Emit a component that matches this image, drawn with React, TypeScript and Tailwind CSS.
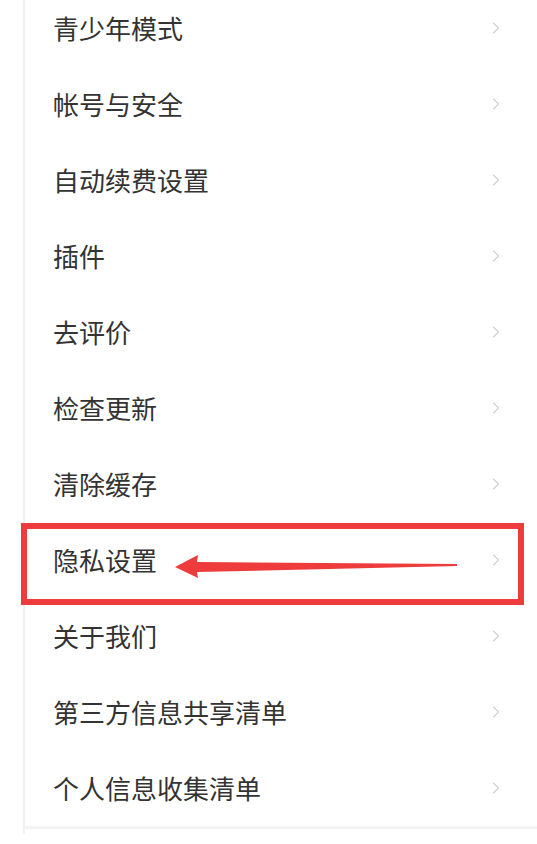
import { ChevronRight } from "lucide-react";

const items = [
  "青少年模式",
  "帐号与安全",
  "自动续费设置",
  "插件",
  "去评价",
  "检查更新",
  "清除缓存",
  "隐私设置",
  "关于我们",
  "第三方信息共享清单",
  "个人信息收集清单",
];

function SettingRow({ label }: { label: string }) {
  return (
    <div className="flex h-[76px] items-center justify-between pl-[28px] pr-[31px]">
      <span className="text-[26px] leading-none text-[#333333]">{label}</span>
      <ChevronRight className="h-[20px] w-[20px] text-[#cfcfcf]" strokeWidth={1.3} />
    </div>
  );
}

export default function App() {
  return (
    <div
      className="relative h-[844px] w-[537px] overflow-hidden bg-white"
      style={{ fontFamily: '"Noto Sans CJK SC", "Noto Sans", sans-serif' }}
    >
      <div className="ml-[23px] h-full border-l-2 border-[#f1f1f1]">
        <div className="-mt-[10px]">
          {items.map((item) => (
            <SettingRow key={item} label={item} />
          ))}
        </div>
        <div className="h-[3px] bg-[#f4f4f4]" />
      </div>

      {/* 标注：红框 + 箭头 */}
      <div className="absolute left-[21px] top-[523px] h-[82px] w-[503px] border-[6px] border-[#ee3b3b]" />
      <svg className="absolute left-0 top-0" width="537" height="844" viewBox="0 0 537 844">
        <polygon points="175,567 198,555 197,562 457,564 457,566 197,572 198,578" fill="#ee3b3b" />
      </svg>
    </div>
  );
}
